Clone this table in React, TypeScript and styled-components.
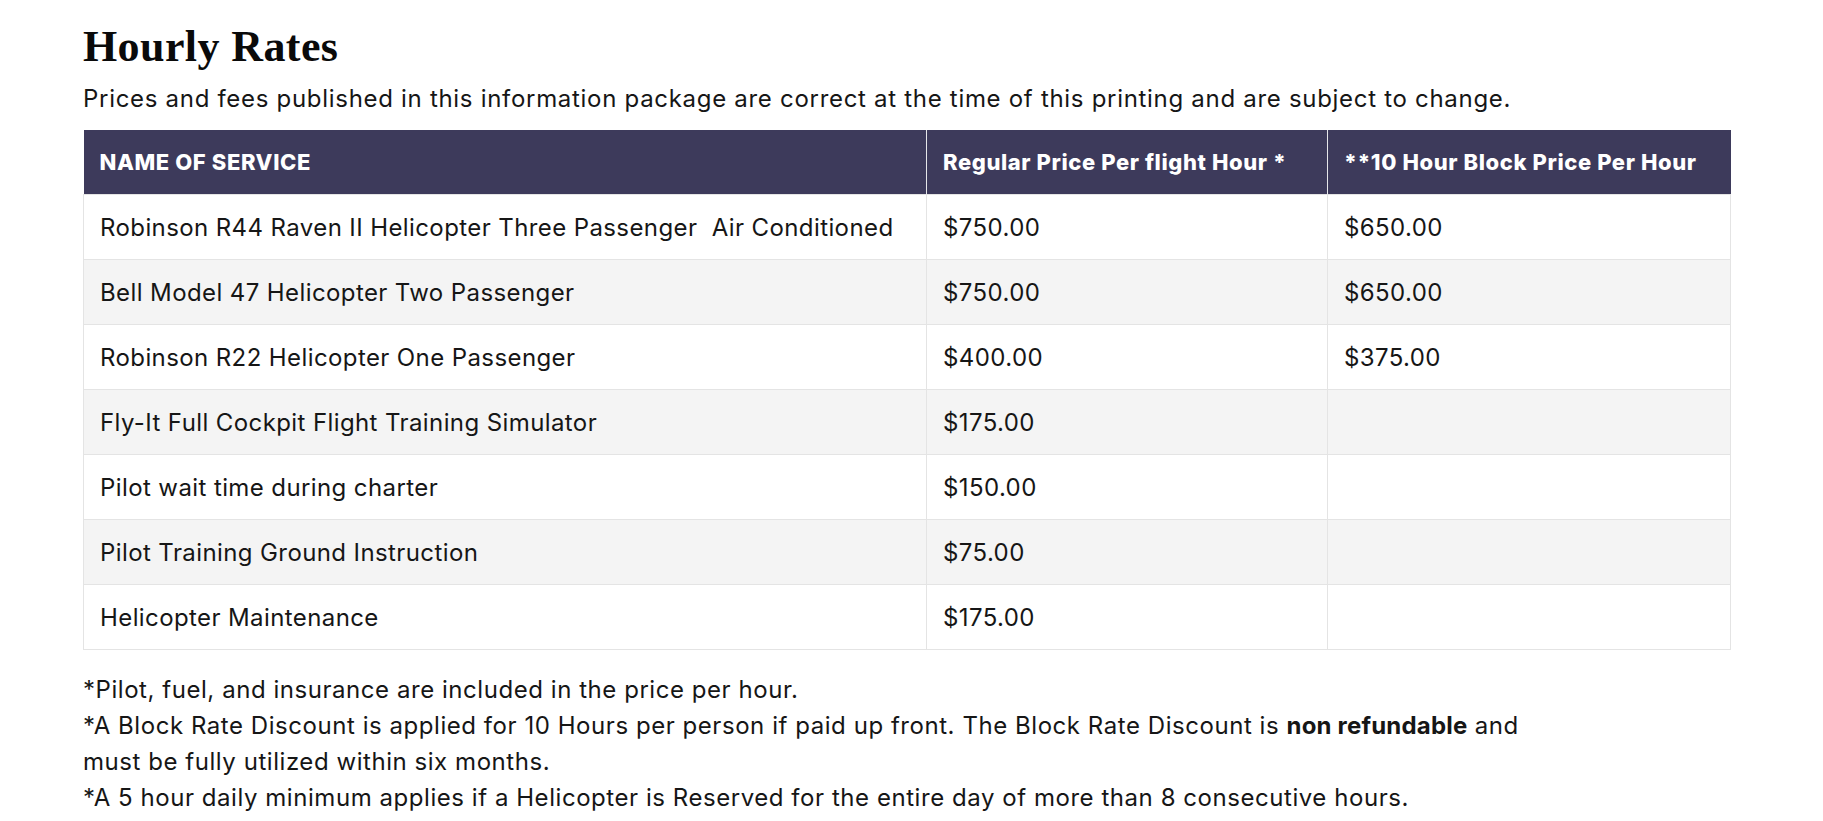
import styled, { createGlobalStyle } from 'styled-components';

interface RateRow {
  service: string;
  regular: string;
  block?: string;
}

const rates: RateRow[] = [
  {
    service: 'Robinson R44 Raven II Helicopter Three Passenger\u00a0 Air Conditioned',
    regular: '$750.00',
    block: '$650.00',
  },
  { service: 'Bell Model 47 Helicopter Two Passenger', regular: '$750.00', block: '$650.00' },
  { service: 'Robinson R22 Helicopter One Passenger', regular: '$400.00', block: '$375.00' },
  { service: 'Fly-It Full Cockpit Flight Training Simulator', regular: '$175.00' },
  { service: 'Pilot wait time during charter', regular: '$150.00' },
  { service: 'Pilot Training Ground Instruction', regular: '$75.00' },
  { service: 'Helicopter Maintenance', regular: '$175.00' },
];

const GlobalStyle = createGlobalStyle`
  html, body {
    margin: 0;
    padding: 0;
    background: #ffffff;
  }
  body {
    font-family: Inter, "Noto Sans", sans-serif;
    color: #161616;
  }
`;

const Page = styled.main`
  width: 1647px;
  padding: 21px 0 0 83px;
`;

const Title = styled.h1`
  margin: 0;
  font-family: "Liberation Serif", serif;
  font-weight: 700;
  font-size: 44px;
  line-height: 52px;
  letter-spacing: 0.4px;
  color: #0a0a0a;
`;

const Intro = styled.p`
  margin: 8px 0 13px;
  font-size: 24px;
  line-height: 36px;
  letter-spacing: 0.7px;
`;

const Table = styled.table`
  width: 1647px;
  border-collapse: collapse;
  table-layout: fixed;
`;

const HeadCell = styled.th`
  height: 64px;
  padding: 0 16px;
  background: #3d3a5b;
  color: #ffffff;
  text-align: left;
  font-weight: 800;
  font-size: 22px;
  letter-spacing: 0.6px;
  white-space: nowrap;
  border-left: 1px solid #e6e6ea;
  &:first-child {
    border-left: none;
  }
`;

const Row = styled.tr<{ $shaded: boolean }>`
  background: ${(p) => (p.$shaded ? '#f4f4f4' : '#ffffff')};
`;

const Cell = styled.td`
  height: 64px;
  padding: 0 16px;
  border: 1px solid #e4e4e4;
  font-size: 24px;
  letter-spacing: 0.4px;
  vertical-align: middle;
  white-space: nowrap;
`;

const Notes = styled.p`
  margin: 22px 0 0;
  font-size: 24px;
  line-height: 36px;
  letter-spacing: 0.55px;

  strong {
    font-weight: 700;
    letter-spacing: 0.2px;
  }
`;

export default function App() {
  return (
    <Page>
      <GlobalStyle />
      <Title>Hourly Rates</Title>
      <Intro>
        Prices and fees published in this information package are correct at the time of this
        printing and are subject to change.
      </Intro>
      <Table>
        <colgroup>
          <col style={{ width: 843 }} />
          <col style={{ width: 401 }} />
          <col style={{ width: 403 }} />
        </colgroup>
        <thead>
          <tr>
            <HeadCell>NAME OF SERVICE</HeadCell>
            <HeadCell>Regular Price Per flight Hour *</HeadCell>
            <HeadCell>**10 Hour Block Price Per Hour</HeadCell>
          </tr>
        </thead>
        <tbody>
          {rates.map((r, i) => (
            <Row key={r.service} $shaded={i % 2 === 1}>
              <Cell>{r.service}</Cell>
              <Cell>{r.regular}</Cell>
              <Cell>{r.block ?? ''}</Cell>
            </Row>
          ))}
        </tbody>
      </Table>
      <Notes>
        *Pilot, fuel, and insurance are included in the price per hour.
        <br />
        *A Block Rate Discount is applied for 10 Hours per person if paid up front. The Block Rate
        Discount is <strong>non refundable</strong> and
        <br />
        must be fully utilized within six months.
        <br />
        *A 5 hour daily minimum applies if a Helicopter is Reserved for the entire day of more than
        8 consecutive hours.
      </Notes>
    </Page>
  );
}
